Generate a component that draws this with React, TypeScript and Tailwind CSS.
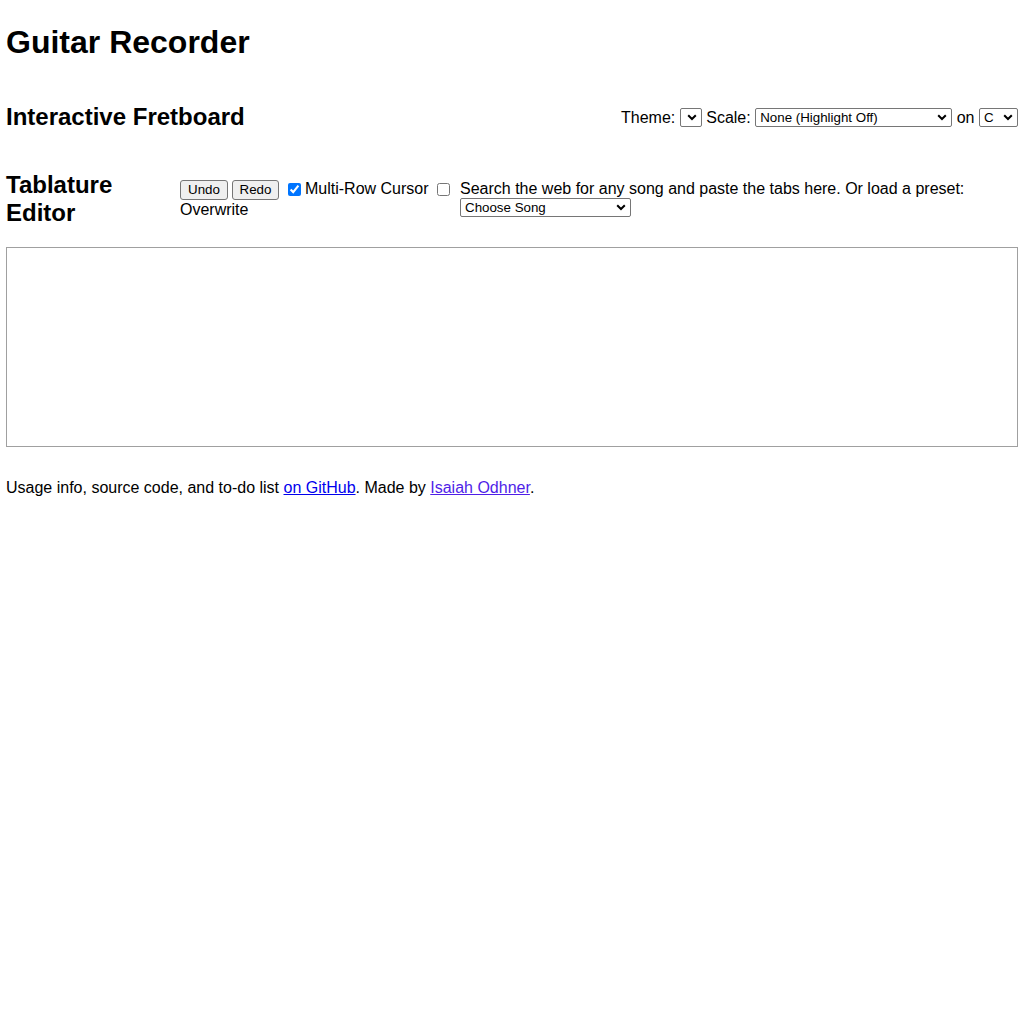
import React from "react";

// small native-looking dropdown (chevron drawn on top)
function Dropdown({ width, label, options }: { width: string; label: string; options: string[] }) {
  return (
    <span className={`relative flex h-[19px] ${width}`}>
      <select
        defaultValue={label}
        className="h-full w-full appearance-none rounded-[2px] border border-[#767676] bg-white pl-[4px] pr-[16px] text-[13.33px] leading-[17px] text-black"
      >
        {options.map((o) => (
          <option key={o}>{o}</option>
        ))}
      </select>
      <svg
        className="pointer-events-none absolute right-[5px] top-[6px]"
        width="10"
        height="7"
        viewBox="0 0 10 7"
        fill="none"
      >
        <polyline points="1.2,1.2 5,5 8.8,1.2" stroke="#000" strokeWidth="2" />
      </svg>
    </span>
  );
}

function Btn({ children, width }: { children: React.ReactNode; width: string }) {
  return (
    <button
      className={`block h-[20px] ${width} rounded-[3px] border border-[#767676] bg-[#efefef] text-center text-[13.33px] leading-[16px] text-black`}
    >
      {children}
    </button>
  );
}

export default function App() {
  return (
    <div className="min-h-screen bg-white px-[6px] font-['Liberation_Sans',Arial,sans-serif] text-[16px] text-black">
      <h1 className="pt-[24px] text-[32px] font-bold leading-[37px]">Guitar Recorder</h1>

      {/* fretboard header + theme / scale controls */}
      <div className="mt-[42px] flex items-center justify-between">
        <h2 className="text-[24px] font-bold leading-[28px]">Interactive Fretboard</h2>
        <div className="flex items-center gap-[4.5px] leading-[19px]">
          <span>Theme:</span>
          <Dropdown width="w-[22px]" label="" options={[""]} />
          <span>Scale:</span>
          <Dropdown
            width="w-[197px]"
            label="None (Highlight Off)"
            options={["None (Highlight Off)", "Major", "Minor", "Pentatonic"]}
          />
          <span>on</span>
          <Dropdown width="w-[39px]" label="C" options={["C", "D", "E", "F", "G", "A", "B"]} />
        </div>
      </div>

      {/* tablature editor header */}
      <div className="mt-[40px] flex items-start">
        <h2 className="w-[174px] shrink-0 text-[24px] font-bold leading-[28px]">Tablature Editor</h2>
        <div className="flex w-[276px] shrink-0 flex-wrap items-start pt-[9px]">
          <Btn width="w-[48px]">Undo</Btn>
          <div className="ml-[4px] flex">
            <Btn width="w-[47px]">Redo</Btn>
          </div>
          <label className="flex items-start leading-[18px]">
            <input type="checkbox" defaultChecked className="ml-[9px] mr-[4px] mt-[3px] h-[13px] w-[13px]" />
            Multi-Row Cursor
          </label>
          <input type="checkbox" className="ml-[8px] mr-[3px] mt-[3px] h-[13px] w-[13px]" />
          <span className="leading-[19px]">Overwrite</span>
        </div>
        <div className="ml-[4px] flex flex-col pt-[9px]">
          <p className="leading-[18px]">
            Search the web for any song and paste the tabs here. Or load a preset:
          </p>
          <Dropdown
            width="w-[171px]"
            label="Choose Song"
            options={["Choose Song", "Greensleeves", "Stairway", "Smoke on the Water"]}
          />
        </div>
      </div>

      <textarea className="mt-[20px] block h-[200px] w-full resize-none border border-[#a0a0a0] bg-white" />

      <p className="mt-[32px] leading-[18px]">
        Usage info, source code, and to-do list{" "}
        <a href="#" className="text-[#0000ee] underline">
          on GitHub
        </a>
        . Made by{" "}
        <a href="#" className="text-[#4f1ee8] underline">
          Isaiah Odhner
        </a>
        .
      </p>
    </div>
  );
}
